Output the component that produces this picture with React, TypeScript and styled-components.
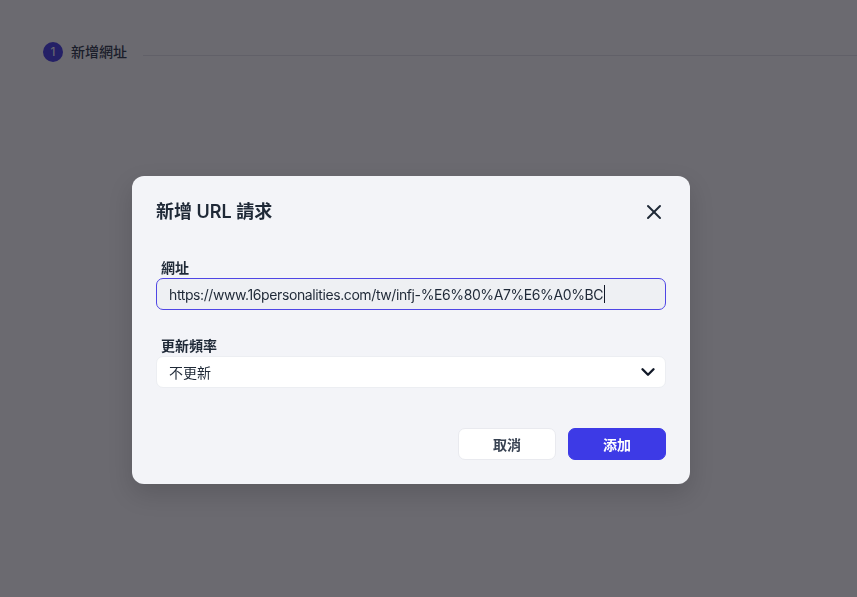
import React from "react";
import styled, { createGlobalStyle } from "styled-components";
import { X, ChevronDown } from "lucide-react";

const GlobalStyle = createGlobalStyle`
  * { box-sizing: border-box; }
  html, body { margin: 0; padding: 0; }
  body {
    background: #ffffff;
    font-family: Inter, "Noto Sans CJK TC", "Noto Sans", sans-serif;
    color: #1f2937;
    -webkit-font-smoothing: antialiased;
  }
`;

const Page = styled.div`
  width: 857px;
  height: 597px;
  padding: 42px 0 0 43px;
`;

const Stepper = styled.div`
  display: flex;
  align-items: center;
`;

const StepCircle = styled.div`
  width: 20px;
  height: 20px;
  border-radius: 50%;
  background: #4f46e5;
  color: #ffffff;
  font-size: 12px;
  line-height: 20px;
  text-align: center;
  flex: none;
`;

const StepLabel = styled.span`
  margin-left: 8px;
  font-size: 14px;
  font-weight: 500;
  color: #374151;
  line-height: 20px;
`;

const StepLine = styled.div`
  flex: 1;
  height: 1px;
  margin: 6px 0 0 16px;
  background: #e5e7eb;
`;

const Overlay = styled.div`
  position: fixed;
  inset: 0;
  background: rgba(8, 7, 17, 0.6);
  display: flex;
  align-items: flex-start;
  justify-content: flex-start;
  padding: 176px 0 0 132px;
`;

const Dialog = styled.div`
  width: 558px;
  background: #f3f4f8;
  border-radius: 12px;
  padding: 22px 24px 24px;
  box-shadow: 0 10px 25px rgba(0, 0, 0, 0.15);
`;

const Header = styled.div`
  display: flex;
  align-items: center;
  justify-content: space-between;
  height: 28px;
`;

const Title = styled.h2`
  margin: 0;
  font-size: 18px;
  font-weight: 600;
  line-height: 28px;
  color: #1f2937;
`;

const CloseButton = styled.button`
  border: none;
  background: transparent;
  padding: 0;
  width: 24px;
  height: 24px;
  display: flex;
  align-items: center;
  justify-content: center;
  color: #1f2937;
  cursor: pointer;
`;

const Field = styled.div<{ $top: number }>`
  margin-top: ${(p) => p.$top}px;
  display: flex;
  flex-direction: column;
`;

const Label = styled.label`
  padding-left: 5px;
  font-size: 14px;
  font-weight: 600;
  line-height: 20px;
  color: #1f2937;
`;

const UrlInput = styled.div`
  height: 32px;
  border: 1px solid #4f46e5;
  border-radius: 7px;
  background: #eef0f3;
  padding: 0 12px;
  display: flex;
  align-items: center;
  font-size: 14px;
  letter-spacing: -0.4px;
  color: #1f2937;
  white-space: nowrap;
  overflow: hidden;
`;

const Caret = styled.span`
  display: inline-block;
  width: 1px;
  height: 18px;
  background: #111827;
  margin-left: 1px;
`;

const Select = styled.div`
  height: 32px;
  border: 1px solid #eceef2;
  border-radius: 7px;
  background: #ffffff;
  padding: 0 6px 0 12px;
  display: flex;
  align-items: center;
  justify-content: space-between;
  font-size: 14px;
  color: #1f2937;
`;

const Footer = styled.div`
  margin-top: 40px;
  display: flex;
  justify-content: flex-end;
  gap: 12px;
`;

const Button = styled.button<{ $primary?: boolean }>`
  width: 98px;
  height: 32px;
  border-radius: 7px;
  font-family: inherit;
  font-size: 14px;
  font-weight: 600;
  cursor: pointer;
  border: 1px solid ${(p) => (p.$primary ? "#3d3ae6" : "#e9eaef")};
  background: ${(p) => (p.$primary ? "#3d3ae6" : "#ffffff")};
  color: ${(p) => (p.$primary ? "#ffffff" : "#374151")};
`;

export default function App() {
  return (
    <>
      <GlobalStyle />
      <Page>
        <Stepper>
          <StepCircle>1</StepCircle>
          <StepLabel>新增網址</StepLabel>
          <StepLine />
        </Stepper>
      </Page>
      <Overlay>
        <Dialog>
          <Header>
            <Title>新增 URL 請求</Title>
            <CloseButton aria-label="close">
              <X size={24} strokeWidth={2} />
            </CloseButton>
          </Header>
          <Field $top={32}>
            <Label>網址</Label>
            <UrlInput>
              https://www.16personalities.com/tw/infj-%E6%80%A7%E6%A0%BC
              <Caret />
            </UrlInput>
          </Field>
          <Field $top={26}>
            <Label>更新頻率</Label>
            <Select>
              <span>不更新</span>
              <ChevronDown size={22} strokeWidth={2.6} color="#111827" />
            </Select>
          </Field>
          <Footer>
            <Button>取消</Button>
            <Button $primary>添加</Button>
          </Footer>
        </Dialog>
      </Overlay>
    </>
  );
}
